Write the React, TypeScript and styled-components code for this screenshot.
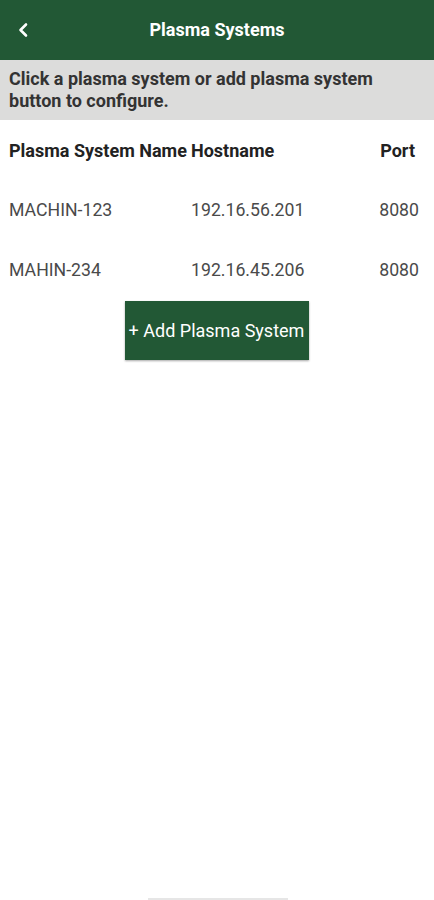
import React from "react";
import styled, { createGlobalStyle } from "styled-components";

const Global = createGlobalStyle`
  html, body { margin: 0; padding: 0; background: #ffffff; }
  body { font-family: Roboto, "Noto Sans", Arial, sans-serif; }
  #root { min-height: 900px; }
`;

const Screen = styled.div`
  width: 434px;
  height: 900px;
  display: flex;
  flex-direction: column;
  position: relative;
  overflow: hidden;
  background: #fff;
`;

const Header = styled.header`
  height: 60px;
  background: #225835;
  display: grid;
  grid-template-columns: 60px 1fr 60px;
  align-items: center;
  color: #fff;
`;

const BackButton = styled.button`
  background: none;
  border: none;
  padding: 0 0 0 16px;
  height: 60px;
  display: flex;
  align-items: center;
  cursor: pointer;
`;

const Title = styled.h1`
  margin: 0;
  text-align: center;
  font-size: 18px;
  font-weight: 700;
  padding-bottom: 1px;
`;

const Banner = styled.div`
  height: 60px;
  box-sizing: border-box;
  background: #dcdcdb;
  padding: 8px 9px 0;
  font-size: 18px;
  font-weight: 700;
  line-height: 22px;
  color: #333;
`;

const Row = styled.div<{ $head?: boolean }>`
  height: 60px;
  display: grid;
  grid-template-columns: 182px 1fr auto;
  align-items: center;
  padding: 0 ${(p) => (p.$head ? "19px" : "15px")} 0 9px;
  font-size: ${(p) => (p.$head ? "18px" : "17.7px")};
  font-weight: ${(p) => (p.$head ? 700 : 400)};
  color: ${(p) => (p.$head ? "#222" : "#4a4a4a")};
  white-space: nowrap;
`;

const Cell = styled.span<{ $right?: boolean }>`
  text-align: ${(p) => (p.$right ? "right" : "left")};
`;

const ButtonWrap = styled.div`
  display: flex;
  justify-content: center;
  padding-top: 1px;
  padding-right: 1px;
`;

const AddButton = styled.button`
  width: 184px;
  height: 59px;
  padding: 0;
  background: #225835;
  color: #fff;
  border: none;
  font-family: Roboto, Arial, sans-serif;
  font-size: 18px;
  font-weight: 400;
  box-shadow: 0 1px 2px rgba(0, 0, 0, 0.35);
  cursor: pointer;
`;

const HomeBar = styled.div`
  position: absolute;
  bottom: 0;
  left: 148px;
  width: 140px;
  height: 2px;
  background: #e6e6e6;
`;

const rows = [
  { name: "MACHIN-123", host: "192.16.56.201", port: "8080" },
  { name: "MAHIN-234", host: "192.16.45.206", port: "8080" },
];

export default function App() {
  return (
    <>
      <Global />
      <Screen>
        <Header>
          <BackButton aria-label="Back">
            <svg width="14" height="16" viewBox="0 0 14 16">
              <path d="M10 2.5 L4.5 8 L10 13.5" fill="none" stroke="#fff" strokeWidth="2.6" strokeLinecap="round" strokeLinejoin="round" />
            </svg>
          </BackButton>
          <Title>Plasma Systems</Title>
          <span />
        </Header>
        <Banner>Click a plasma system or add plasma system button to configure.</Banner>
        <Row $head>
          <Cell>Plasma System Name</Cell>
          <Cell>Hostname</Cell>
          <Cell $right>Port</Cell>
        </Row>
        {rows.map((r) => (
          <Row key={r.name}>
            <Cell>{r.name}</Cell>
            <Cell>{r.host}</Cell>
            <Cell $right>{r.port}</Cell>
          </Row>
        ))}
        <ButtonWrap>
          <AddButton>+ Add Plasma System</AddButton>
        </ButtonWrap>
        <HomeBar />
      </Screen>
    </>
  );
}
